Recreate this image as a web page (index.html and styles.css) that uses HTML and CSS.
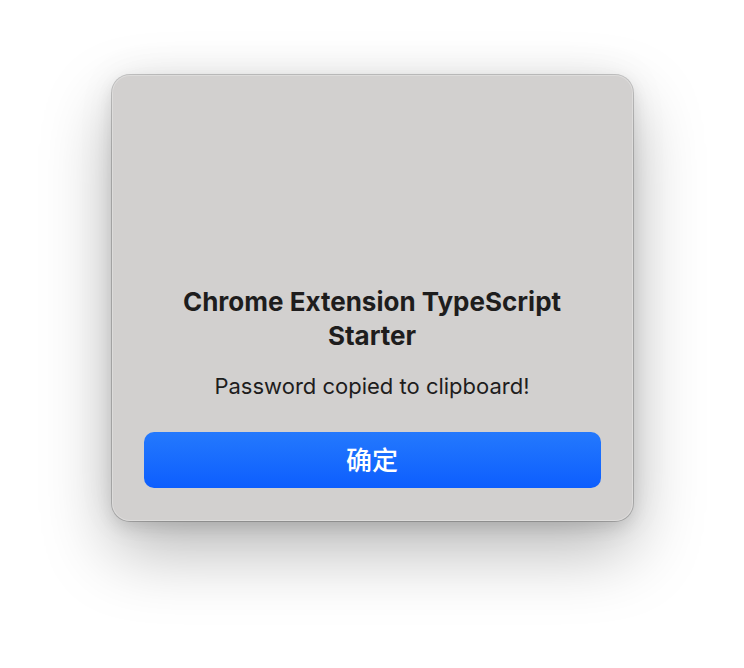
FILE: index.html
```html
<!DOCTYPE html>
<html lang="zh-CN">
<head>
<meta charset="utf-8">
<title>Alert</title>
<link rel="stylesheet" href="styles.css">
</head>
<body>
<div class="stage">
  <div class="dialog">
    <h1 class="title">Chrome Extension TypeScript Starter</h1>
    <p class="message">Password copied to clipboard!</p>
    <button class="ok">确定</button>
  </div>
</div>
</body>
</html>
```
FILE: styles.css
```css
html, body {
  margin: 0;
  padding: 0;
  background: #ffffff;
}
.stage {
  width: 744px;
  height: 668px;
  display: flex;
  justify-content: center;
  align-items: flex-start;
  padding-top: 75px;
  box-sizing: border-box;
}
.dialog {
  width: 521px;
  height: 446px;
  box-sizing: border-box;
  padding: 210px 32px 32px;
  background: #d2d0cf;
  border-radius: 18px;
  box-shadow:
    0 0 0 1px rgba(0, 0, 0, 0.2),
    inset 0 0 0 1px rgba(255, 255, 255, 0.25),
    0 30px 70px rgba(0, 0, 0, 0.28),
    0 0 40px rgba(0, 0, 0, 0.06),
    0 6px 16px rgba(0, 0, 0, 0.1);
  display: flex;
  flex-direction: column;
  align-items: stretch;
  font-family: Inter, "Noto Sans", "Noto Sans CJK SC", sans-serif;
  color: #1e1d1d;
  text-align: center;
}
.title {
  margin: 0;
  font-size: 26px;
  line-height: 34px;
  font-weight: 700;
}
.message {
  margin: 19px 0 0;
  font-size: 22px;
  line-height: 28px;
  font-weight: 400;
}
.ok {
  margin-top: 32px;
  height: 56px;
  border: none;
  border-radius: 10px;
  background: linear-gradient(180deg, #2479fd 0%, #0d5efe 100%);
  color: #ffffff;
  font-family: "Noto Sans CJK SC", sans-serif;
  font-size: 26px;
  font-weight: 500;
  padding: 0 0 3px;
}
```
